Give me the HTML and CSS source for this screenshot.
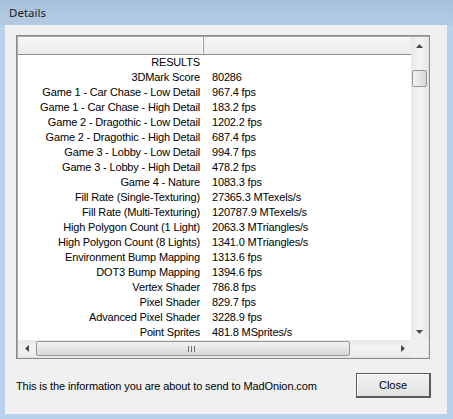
FILE: index.html
```html
<!DOCTYPE html>
<html>
<head>
<meta charset="utf-8">
<link rel="stylesheet" href="styles.css">
</head>
<body>
<div class="window">
  <div class="titlebar">Details</div>
  <div class="client">
    <div class="listview">
      <div class="list">
        <div class="header">
          <div class="hcell c1"></div>
          <div class="hcell c2"></div>
        </div>
        <div class="rows">
          <div class="row"><span class="k">RESULTS</span><span class="v"></span></div>
          <div class="row"><span class="k">3DMark Score</span><span class="v">80286</span></div>
          <div class="row"><span class="k">Game 1 - Car Chase - Low Detail</span><span class="v">967.4 fps</span></div>
          <div class="row"><span class="k">Game 1 - Car Chase - High Detail</span><span class="v">183.2 fps</span></div>
          <div class="row"><span class="k">Game 2 - Dragothic - Low Detail</span><span class="v">1202.2 fps</span></div>
          <div class="row"><span class="k">Game 2 - Dragothic - High Detail</span><span class="v">687.4 fps</span></div>
          <div class="row"><span class="k">Game 3 - Lobby - Low Detail</span><span class="v">994.7 fps</span></div>
          <div class="row"><span class="k">Game 3 - Lobby - High Detail</span><span class="v">478.2 fps</span></div>
          <div class="row"><span class="k">Game 4 - Nature</span><span class="v">1083.3 fps</span></div>
          <div class="row"><span class="k">Fill Rate (Single-Texturing)</span><span class="v">27365.3 MTexels/s</span></div>
          <div class="row"><span class="k">Fill Rate (Multi-Texturing)</span><span class="v">120787.9 MTexels/s</span></div>
          <div class="row"><span class="k">High Polygon Count (1 Light)</span><span class="v">2063.3 MTriangles/s</span></div>
          <div class="row"><span class="k">High Polygon Count (8 Lights)</span><span class="v">1341.0 MTriangles/s</span></div>
          <div class="row"><span class="k">Environment Bump Mapping</span><span class="v">1313.6 fps</span></div>
          <div class="row"><span class="k">DOT3 Bump Mapping</span><span class="v">1394.6 fps</span></div>
          <div class="row"><span class="k">Vertex Shader</span><span class="v">786.8 fps</span></div>
          <div class="row"><span class="k">Pixel Shader</span><span class="v">829.7 fps</span></div>
          <div class="row"><span class="k">Advanced Pixel Shader</span><span class="v">3228.9 fps</span></div>
          <div class="row"><span class="k">Point Sprites</span><span class="v">481.8 MSprites/s</span></div>
        </div>
      </div>
      <div class="vscroll">
        <div class="sbtn"><svg width="7" height="4" viewBox="0 0 7 4"><path d="M3.5 0 L7 4 L0 4 Z" fill="#4a4a4a"/></svg></div>
        <div class="vtrack"><div class="vthumb"></div></div>
        <div class="sbtn"><svg width="7" height="4" viewBox="0 0 7 4"><path d="M0 0 L7 0 L3.5 4 Z" fill="#4a4a4a"/></svg></div>
      </div>
      <div class="hscroll">
        <div class="sbtn"><svg width="4" height="7" viewBox="0 0 4 7"><path d="M0 3.5 L4 0 L4 7 Z" fill="#4a4a4a"/></svg></div>
        <div class="htrack"><div class="hthumb"><span class="grip"></span><span class="grip"></span><span class="grip"></span></div></div>
        <div class="sbtn"><svg width="4" height="7" viewBox="0 0 4 7"><path d="M0 0 L4 3.5 L0 7 Z" fill="#4a4a4a"/></svg></div>
      </div>
      <div class="corner"></div>
    </div>
    <div class="footer">
      <div class="info">This is the information you are about to send to MadOnion.com</div>
      <div class="button">Close</div>
    </div>
  </div>
</div>
</body>
</html>
```

FILE: styles.css
```css
html, body {
  margin: 0;
  padding: 0;
}
body {
  width: 453px;
  height: 419px;
  overflow: hidden;
  font-family: "Liberation Sans", Arial, sans-serif;
}
.window {
  width: 453px;
  height: 419px;
  background: #b9d1ea;
  display: flex;
  flex-direction: column;
  box-sizing: border-box;
}
.titlebar {
  height: 25px;
  flex: none;
  padding-left: 9px;
  box-sizing: border-box;
  line-height: 26px;
  font-family: "Noto Sans", "Open Sans", sans-serif;
  font-size: 11.5px;
  color: #1a1a1a;
  background: linear-gradient(#a8c0da, #b4cbe4);
}
.client {
  flex: none;
  margin: 0 6px 0 5px;
  height: 389px;
  background: #f0f0f0;
  padding: 10px 16px 0 11px;
  box-sizing: border-box;
  display: flex;
  flex-direction: column;
}
.listview {
  width: 414px;
  height: 324px;
  box-sizing: border-box;
  border: 1px solid #8b8b8b;
  box-shadow: inset 1px 1px 0 #a9a9a9, inset -1px -1px 0 #e3e3e3;
  padding: 1px;
  background: #ffffff;
  display: grid;
  grid-template-columns: 393px 17px;
  grid-template-rows: 303px 17px;
}
.list {
  display: flex;
  flex-direction: column;
  overflow: hidden;
  background: #fff;
}
.header {
  height: 18px;
  flex: none;
  display: flex;
  box-sizing: border-box;
  border-bottom: 1px solid #8e8e8e;
  background: linear-gradient(#f6f6f6, #ececec);
}
.hcell {
  box-sizing: border-box;
  height: 17px;
}
.c1 {
  width: 186px;
  border-right: 1px solid #9e9e9e;
  box-shadow: inset -1px 0 0 #ffffff;
}
.c2 {
  flex: 1;
}
.rows {
  display: flex;
  flex-direction: column;
}
.row {
  height: 15px;
  display: flex;
  font-size: 11px;
  line-height: 15px;
  color: #000;
  letter-spacing: -0.16px;
}
.k {
  width: 182px;
  text-align: right;
  white-space: nowrap;
  flex: none;
}
.v {
  padding-left: 12px;
  white-space: nowrap;
}
.vscroll {
  display: flex;
  flex-direction: column;
  background: linear-gradient(90deg, #e9e9e9, #f3f3f3 50%, #e9e9e9);
}
.sbtn {
  width: 17px;
  height: 17px;
  flex: none;
  display: flex;
  align-items: center;
  justify-content: center;
}
.vtrack {
  flex: 1;
  display: flex;
  flex-direction: column;
  padding-top: 16px;
  align-items: center;
}
.vthumb {
  width: 15px;
  height: 17px;
  box-sizing: border-box;
  border: 1px solid #979797;
  border-radius: 2px;
  background: linear-gradient(90deg, #f2f2f2, #e6e6e6 50%, #d6d6d6);
}
.hscroll {
  display: flex;
  background: linear-gradient(#e9e9e9, #f3f3f3 50%, #e9e9e9);
}
.htrack {
  flex: 1;
  display: flex;
  align-items: center;
  padding-left: 1px;
}
.hthumb {
  width: 314px;
  height: 15px;
  box-sizing: border-box;
  border: 1px solid #979797;
  border-radius: 2px;
  background: linear-gradient(#f2f2f2, #e6e6e6 50%, #d6d6d6);
  display: flex;
  justify-content: center;
  align-items: center;
  gap: 2px;
  padding-right: 4px;
}
.grip {
  width: 1px;
  height: 6px;
  background: #6e6e6e;
}
.corner {
  background: #f0f0f0;
}
.footer {
  margin-top: 14px;
  display: flex;
  align-items: center;
  justify-content: space-between;
}
.info {
  font-size: 11px;
  color: #000;
  letter-spacing: -0.1px;
  margin-top: 1px;
}
.button {
  width: 75px;
  height: 25px;
  box-sizing: border-box;
  border: 1px solid #5a5a5a;
  border-right-width: 2px;
  border-bottom-width: 2px;
  background: linear-gradient(#f2f2f2, #e2e2e2);
  box-shadow: inset 1px 1px 0 #ffffff;
  font-size: 11px;
  display: flex;
  align-items: center;
  justify-content: center;
}
```
